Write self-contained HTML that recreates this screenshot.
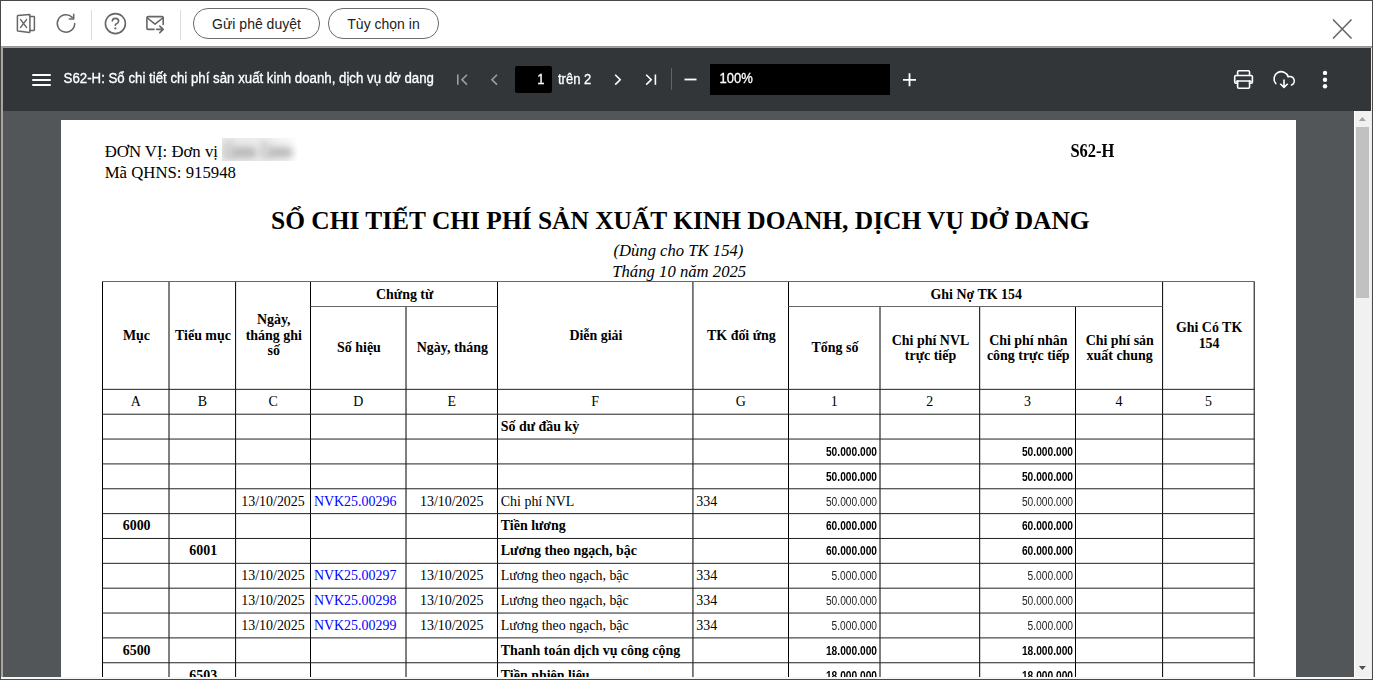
<!DOCTYPE html><html><head><meta charset="utf-8"><style>
*{margin:0;padding:0;box-sizing:border-box}
html,body{width:1373px;height:680px;overflow:hidden;background:#4b4946}
.a{position:absolute}
.t{position:absolute;white-space:nowrap}
</style></head><body>
<div class="a" style="left:1px;top:1px;width:1371px;height:45px;background:#fff"></div>
<div class="a" style="left:1px;top:46px;width:1371px;height:1px;background:#999"></div>
<div class="a" style="left:1px;top:47px;width:1371px;height:1px;background:#a0a0a0"></div>
<div class="a" style="left:1px;top:46px;width:2px;height:632px;background:#a6a6a6"></div>
<div class="a" style="left:1px;top:677px;width:1371px;height:2px;background:#f6f6f6"></div>
<div class="a" style="left:1371px;top:48px;width:1px;height:631px;background:#ececec"></div>
<svg class="a" style="left:0;top:0" width="1373" height="46" viewBox="0 0 1373 46">
<g fill="none" stroke="#666" stroke-width="1.5" stroke-linejoin="round" stroke-linecap="round">
<path d="M17.4 16.2 Q17.4 15.6 18 15.5 L29.3 14.5 Q29.9 14.5 29.9 15.1 L29.9 31.8 Q29.9 32.4 29.3 32.4 L18 31.1 Q17.4 31 17.4 30.4 Z"/>
<path d="M29.9 16.6 L33.8 16.6 Q34.4 16.6 34.4 17.2 L34.4 29.8 Q34.4 30.4 33.8 30.4 L29.9 30.4"/>
<path d="M20.6 19.6 L26.5 27.4 M26.5 19.6 L20.6 27.4"/>
<path d="M74.7 23.5 A8.7 8.7 0 1 1 72.2 17.35"/>
<path d="M69.3 19 L73.7 19 L73.7 14.2"/>
</g>
<g fill="none" stroke="#666" stroke-width="1.6" stroke-linejoin="round" stroke-linecap="round">
<circle cx="115.4" cy="23.6" r="10"/>
<path d="M112.3 21 Q112.5 18.4 115.4 18.4 Q118.6 18.4 118.6 21.2 Q118.6 23.2 116.2 24 Q115.3 24.4 115.3 25.3"/>
<path d="M163.2 24.4 L163.2 17.8 Q163.2 16.6 162 16.6 L148.1 16.6 Q146.9 16.6 146.9 17.8 L146.9 28.15 Q146.9 29.35 148.1 29.35 L154.1 29.35"/>
<path d="M147.4 18 L155 24.2 L162.7 18"/>
<path d="M156.6 29.35 L163.2 29.35 M159.8 26.1 L163.2 29.35 L159.8 32.6"/>
</g>
<circle cx="115.4" cy="28.4" r="1.05" fill="#666"/>
<rect x="91" y="10" width="1" height="30" fill="#ddd"/>
<rect x="180" y="10" width="1" height="30" fill="#ddd"/>
<g stroke="#666" stroke-width="1.6" stroke-linecap="butt">
<path d="M1333 19.5 L1351.5 38.5 M1351.5 19.5 L1333 38.5"/>
</g>
</svg>
<div class="a" style="left:193px;top:8px;width:127px;height:31px;border:1px solid #6b6b6b;border-radius:15px"></div>
<div class="a" style="left:328px;top:8px;width:111px;height:31px;border:1px solid #6b6b6b;border-radius:15px"></div>
<div class="t" style="top:15.75px;font-family:'Liberation Sans', sans-serif;font-size:14px;line-height:16.8px;font-weight:400;font-style:normal;color:#212121;left:193.00px;width:127.00px;text-align:center;">Gửi phê duyệt</div>
<div class="t" style="top:15.75px;font-family:'Liberation Sans', sans-serif;font-size:14px;line-height:16.8px;font-weight:400;font-style:normal;color:#212121;left:328.00px;width:111.00px;text-align:center;">Tùy chọn in</div>
<div class="a" style="left:3px;top:48px;width:1368px;height:63px;background:#323639"></div>
<div class="a" style="left:3px;top:111px;width:1368px;height:566px;background:#525659"></div>
<div class="a" style="left:32px;top:73.5px;width:19px;height:2px;background:#fff;border-radius:1px"></div>
<div class="a" style="left:32px;top:78.5px;width:19px;height:2px;background:#fff;border-radius:1px"></div>
<div class="a" style="left:32px;top:83.5px;width:19px;height:2px;background:#fff;border-radius:1px"></div>
<div class="t" style="top:71.46px;font-family:'Liberation Sans', sans-serif;font-size:13.25px;line-height:15.9px;font-weight:400;font-style:normal;color:#fff;left:63.60px;transform:scaleY(1.09);transform-origin:0 12.54px;-webkit-text-stroke:0.3px #fff;">S62-H: Sổ chi tiết chi phí sản xuất kinh doanh, dịch vụ dở dang</div>
<svg class="a" style="left:0;top:48px" width="1373" height="63" viewBox="0 48 1373 63">
<g fill="none" stroke-width="1.6" stroke-linecap="butt" stroke-linejoin="miter">
<path d="M457.8 74.5 L457.8 84.8" stroke="#9aa0a6"/>
<path d="M467 74.8 L462 79.7 L467 84.6" stroke="#9aa0a6"/>
<path d="M497 74.8 L492 79.7 L497 84.6" stroke="#9aa0a6"/>
<path d="M615.2 74.8 L620.2 79.7 L615.2 84.6" stroke="#fff"/>
<path d="M646.2 74.8 L651.2 79.7 L646.2 84.6" stroke="#fff"/>
<path d="M655.4 74.5 L655.4 84.8" stroke="#fff"/>
<path d="M684.5 79.5 L696.5 79.5" stroke="#fff" stroke-width="1.8"/>
<path d="M903 79.8 L916 79.8 M909.5 73.3 L909.5 86.3" stroke="#fff" stroke-width="1.8"/>
</g>
<rect x="671" y="68" width="1" height="22" fill="#5f6368"/>
<rect x="515" y="66" width="37" height="27" rx="2" fill="#000"/>
<rect x="710" y="64" width="180" height="31" fill="#000"/>
<g fill="none" stroke="#fff" stroke-width="1.6" stroke-linejoin="round" stroke-linecap="round">
<path d="M1237.6 75.5 L1237.6 71.9 Q1237.6 70.7 1238.8 70.7 L1248.35 70.7 Q1249.55 70.7 1249.55 71.9 L1249.55 75.5"/>
<path d="M1237.6 83.3 L1235.9 83.3 Q1234.7 83.3 1234.7 82.1 L1234.7 76.7 Q1234.7 75.5 1235.9 75.5 L1251.2 75.5 Q1252.4 75.5 1252.4 76.7 L1252.4 82.1 Q1252.4 83.3 1251.2 83.3 L1249.55 83.3"/>
<path d="M1236.4 81.8 Q1236.4 81 1237.2 81 L1250.2 81 Q1251 81 1251 81.8"/>
<path d="M1237.6 81 L1237.6 87 Q1237.6 88.2 1238.8 88.2 L1248.35 88.2 Q1249.55 88.2 1249.55 87 L1249.55 81"/>
<path d="M1275.8 83.6 A7.2 7.2 0 1 1 1288.15 76.85 A4.4 4.4 0 0 1 1291.5 85"/>
<path d="M1284 79.4 L1284 87.4 M1280.3 83.7 L1284 87.4 L1287.7 83.7" stroke-linecap="butt"/>
</g>
<circle cx="1325" cy="72.9" r="2.2" fill="#fff"/>
<circle cx="1325" cy="79.7" r="2.2" fill="#fff"/>
<circle cx="1325" cy="86.3" r="2.2" fill="#fff"/>
</svg>
<div class="t" style="top:71.80px;font-family:'Liberation Sans', sans-serif;font-size:13px;line-height:15.6px;font-weight:400;font-style:normal;color:#fff;right:828.50px;text-align:right;transform:scaleY(1.09);transform-origin:0 12.30px;-webkit-text-stroke:0.3px #fff;">1</div>
<div class="t" style="top:71.80px;font-family:'Liberation Sans', sans-serif;font-size:13px;line-height:15.6px;font-weight:400;font-style:normal;color:#fff;left:558.00px;transform:scaleY(1.09);transform-origin:0 12.30px;-webkit-text-stroke:0.3px #fff;">trên 2</div>
<div class="t" style="top:70.90px;font-family:'Liberation Sans', sans-serif;font-size:13px;line-height:15.6px;font-weight:400;font-style:normal;color:#fff;left:719.60px;transform:scaleY(1.09);transform-origin:0 12.30px;-webkit-text-stroke:0.3px #fff;">100%</div>
<div class="a" style="left:1354px;top:111px;width:17px;height:566px;background:#f1f1f1;border-left:1px solid #fff"></div>
<div class="a" style="left:1356px;top:127px;width:13px;height:171px;background:#c1c1c1"></div>
<svg class="a" style="left:1354px;top:111px" width="17" height="566" viewBox="1354 111 17 566">
<path d="M1358.9 121 L1362.4 117 L1365.9 121 Z" fill="#a3a3a3"/>
<path d="M1358.9 666 L1362.4 670 L1365.9 666 Z" fill="#505050"/>
</svg>
<div class="a" style="left:61px;top:120px;width:1235px;height:557px;background:#fff;overflow:hidden">
<div class="t" style="top:21.60px;font-family:'Liberation Serif', serif;font-size:16.75px;line-height:20.1px;font-weight:400;font-style:normal;color:#000;left:43.70px;">ĐƠN VỊ: Đơn vị</div>
<div class="t" style="top:42.50px;font-family:'Liberation Serif', serif;font-size:16.75px;line-height:20.1px;font-weight:400;font-style:normal;color:#000;left:43.70px;">Mã QHNS: 915948</div>
<div class="a" style="left:161px;top:18px;width:76px;height:23px;overflow:hidden;background:linear-gradient(90deg,#e9e9e9 0%,#eeeeee 55%,#f6f6f6 85%,#fff 100%)"><div class="a" style="left:3px;top:9px;width:32px;height:11px;border-radius:6px;background:#b9b9b9;filter:blur(3.5px)"></div><div class="a" style="left:2px;top:3px;width:9px;height:17px;background:#d2d2d2;filter:blur(3px)"></div><div class="a" style="left:40px;top:9px;width:31px;height:11px;border-radius:6px;background:#bcbcbc;filter:blur(3.5px)"></div><div class="a" style="left:38px;top:3px;width:9px;height:16px;background:#d4d4d4;filter:blur(3px)"></div></div>
<div class="t" style="top:21.53px;font-family:'Liberation Serif', serif;font-size:16.5px;line-height:19.8px;font-weight:700;font-style:normal;color:#000;left:1009.40px;transform:scaleY(1.09);transform-origin:0 15.2px">S62-H</div>
<div class="t" style="top:85.84px;font-family:'Liberation Serif', serif;font-size:25.45px;line-height:30.54px;font-weight:700;font-style:normal;color:#000;left:210.00px;width:816.00px;text-align:center;">SỔ CHI TIẾT CHI PHÍ SẢN XUẤT KINH DOANH, DỊCH VỤ DỞ DANG</div>
<div class="t" style="top:121.39px;font-family:'Liberation Serif', serif;font-size:16.65px;line-height:19.98px;font-weight:400;font-style:italic;color:#000;left:552.40px;width:130.00px;text-align:center;">(Dùng cho TK 154)</div>
<div class="t" style="top:141.64px;font-family:'Liberation Serif', serif;font-size:16.7px;line-height:20.04px;font-weight:400;font-style:italic;color:#000;left:551.20px;width:134.10px;text-align:center;">Tháng 10 năm 2025</div>
<svg class="a" style="left:0;top:0" width="1235" height="557" viewBox="61 120 1235 557"><g stroke="#000" stroke-width="1.0" fill="none"><path d="M102.5 281.6 L102.5 700"/><path d="M169.0 281.6 L169.0 700"/><path d="M235.6 281.6 L235.6 700"/><path d="M310.5 281.6 L310.5 700"/><path d="M406.0 306.5 L406.0 700"/><path d="M497.5 281.6 L497.5 700"/><path d="M692.95 281.6 L692.95 700"/><path d="M788.5 281.6 L788.5 700"/><path d="M880.0 306.5 L880.0 700"/><path d="M979.7 306.5 L979.7 700"/><path d="M1075.5 306.5 L1075.5 700"/><path d="M1162.6 281.6 L1162.6 700"/><path d="M1254.2 281.6 L1254.2 700"/></g><g stroke="#222" stroke-width="1.0" fill="none"><path stroke="#666" d="M102.0 281.5 L1254.7 281.5"/><path stroke="#666" d="M310.5 306.5 L497.5 306.5"/><path stroke="#666" d="M788.5 306.5 L1162.6 306.5"/><path d="M102.5 389.35 L1254.2 389.35"/><path d="M102.5 414.21 L1254.2 414.21"/><path d="M102.5 439.06 L1254.2 439.06"/><path d="M102.5 463.92 L1254.2 463.92"/><path d="M102.5 488.77 L1254.2 488.77"/><path d="M102.5 513.62 L1254.2 513.62"/><path d="M102.5 538.48 L1254.2 538.48"/><path d="M102.5 563.34 L1254.2 563.34"/><path d="M102.5 588.19 L1254.2 588.19"/><path d="M102.5 613.05 L1254.2 613.05"/><path d="M102.5 637.90 L1254.2 637.90"/><path d="M102.5 662.76 L1254.2 662.76"/><path d="M102.5 687.61 L1254.2 687.61"/></g></svg>
<div class="t" style="top:207.82px;font-family:'Liberation Serif', serif;font-size:13.95px;line-height:16.74px;font-weight:700;font-style:normal;color:#000;left:42.20px;width:66.50px;text-align:center;">Mục</div>
<div class="t" style="top:207.82px;font-family:'Liberation Serif', serif;font-size:13.95px;line-height:16.74px;font-weight:700;font-style:normal;color:#000;left:108.70px;width:66.60px;text-align:center;">Tiểu mục</div>
<div class="t" style="top:192.12px;font-family:'Liberation Serif', serif;font-size:13.95px;line-height:16.74px;font-weight:700;font-style:normal;color:#000;left:175.30px;width:74.90px;text-align:center;">Ngày,</div>
<div class="t" style="top:207.77px;font-family:'Liberation Serif', serif;font-size:13.95px;line-height:16.74px;font-weight:700;font-style:normal;color:#000;left:175.30px;width:74.90px;text-align:center;">tháng ghi</div>
<div class="t" style="top:223.42px;font-family:'Liberation Serif', serif;font-size:13.95px;line-height:16.74px;font-weight:700;font-style:normal;color:#000;left:175.30px;width:74.90px;text-align:center;">số</div>
<div class="t" style="top:167.02px;font-family:'Liberation Serif', serif;font-size:13.95px;line-height:16.74px;font-weight:700;font-style:normal;color:#000;left:250.20px;width:187.00px;text-align:center;">Chứng từ</div>
<div class="t" style="top:220.02px;font-family:'Liberation Serif', serif;font-size:13.95px;line-height:16.74px;font-weight:700;font-style:normal;color:#000;left:250.20px;width:95.50px;text-align:center;">Số hiệu</div>
<div class="t" style="top:220.02px;font-family:'Liberation Serif', serif;font-size:13.95px;line-height:16.74px;font-weight:700;font-style:normal;color:#000;left:345.70px;width:91.50px;text-align:center;">Ngày, tháng</div>
<div class="t" style="top:207.92px;font-family:'Liberation Serif', serif;font-size:13.95px;line-height:16.74px;font-weight:700;font-style:normal;color:#000;left:437.20px;width:195.45px;text-align:center;">Diễn giải</div>
<div class="t" style="top:207.92px;font-family:'Liberation Serif', serif;font-size:13.95px;line-height:16.74px;font-weight:700;font-style:normal;color:#000;left:632.65px;width:95.55px;text-align:center;">TK đối ứng</div>
<div class="t" style="top:166.82px;font-family:'Liberation Serif', serif;font-size:13.95px;line-height:16.74px;font-weight:700;font-style:normal;color:#000;left:728.20px;width:374.10px;text-align:center;">Ghi Nợ TK 154</div>
<div class="t" style="top:220.32px;font-family:'Liberation Serif', serif;font-size:13.95px;line-height:16.74px;font-weight:700;font-style:normal;color:#000;left:728.20px;width:91.50px;text-align:center;">Tổng số</div>
<div class="t" style="top:212.62px;font-family:'Liberation Serif', serif;font-size:13.95px;line-height:16.74px;font-weight:700;font-style:normal;color:#000;left:819.70px;width:99.70px;text-align:center;">Chi phí NVL</div>
<div class="t" style="top:228.32px;font-family:'Liberation Serif', serif;font-size:13.95px;line-height:16.74px;font-weight:700;font-style:normal;color:#000;left:819.70px;width:99.70px;text-align:center;">trực tiếp</div>
<div class="t" style="top:212.62px;font-family:'Liberation Serif', serif;font-size:13.95px;line-height:16.74px;font-weight:700;font-style:normal;color:#000;left:919.40px;width:95.80px;text-align:center;">Chi phí nhân</div>
<div class="t" style="top:228.32px;font-family:'Liberation Serif', serif;font-size:13.95px;line-height:16.74px;font-weight:700;font-style:normal;color:#000;left:919.40px;width:95.80px;text-align:center;">công trực tiếp</div>
<div class="t" style="top:212.62px;font-family:'Liberation Serif', serif;font-size:13.95px;line-height:16.74px;font-weight:700;font-style:normal;color:#000;left:1015.20px;width:87.10px;text-align:center;">Chi phí sản</div>
<div class="t" style="top:228.32px;font-family:'Liberation Serif', serif;font-size:13.95px;line-height:16.74px;font-weight:700;font-style:normal;color:#000;left:1015.20px;width:87.10px;text-align:center;">xuất chung</div>
<div class="t" style="top:199.62px;font-family:'Liberation Serif', serif;font-size:13.95px;line-height:16.74px;font-weight:700;font-style:normal;color:#000;left:1102.30px;width:91.60px;text-align:center;">Ghi Có TK</div>
<div class="t" style="top:215.62px;font-family:'Liberation Serif', serif;font-size:13.95px;line-height:16.74px;font-weight:700;font-style:normal;color:#000;left:1102.30px;width:91.60px;text-align:center;">154</div>
<div class="t" style="top:274.42px;font-family:'Liberation Serif', serif;font-size:13.95px;line-height:16.74px;font-weight:400;font-style:normal;color:#000;left:41.50px;width:66.50px;text-align:center;">A</div>
<div class="t" style="top:274.42px;font-family:'Liberation Serif', serif;font-size:13.95px;line-height:16.74px;font-weight:400;font-style:normal;color:#000;left:108.00px;width:66.60px;text-align:center;">B</div>
<div class="t" style="top:274.42px;font-family:'Liberation Serif', serif;font-size:13.95px;line-height:16.74px;font-weight:400;font-style:normal;color:#000;left:174.60px;width:74.90px;text-align:center;">C</div>
<div class="t" style="top:274.42px;font-family:'Liberation Serif', serif;font-size:13.95px;line-height:16.74px;font-weight:400;font-style:normal;color:#000;left:249.50px;width:95.50px;text-align:center;">D</div>
<div class="t" style="top:274.42px;font-family:'Liberation Serif', serif;font-size:13.95px;line-height:16.74px;font-weight:400;font-style:normal;color:#000;left:345.00px;width:91.50px;text-align:center;">E</div>
<div class="t" style="top:274.42px;font-family:'Liberation Serif', serif;font-size:13.95px;line-height:16.74px;font-weight:400;font-style:normal;color:#000;left:436.50px;width:195.45px;text-align:center;">F</div>
<div class="t" style="top:274.42px;font-family:'Liberation Serif', serif;font-size:13.95px;line-height:16.74px;font-weight:400;font-style:normal;color:#000;left:631.95px;width:95.55px;text-align:center;">G</div>
<div class="t" style="top:274.42px;font-family:'Liberation Serif', serif;font-size:13.95px;line-height:16.74px;font-weight:400;font-style:normal;color:#000;left:727.50px;width:91.50px;text-align:center;">1</div>
<div class="t" style="top:274.42px;font-family:'Liberation Serif', serif;font-size:13.95px;line-height:16.74px;font-weight:400;font-style:normal;color:#000;left:819.00px;width:99.70px;text-align:center;">2</div>
<div class="t" style="top:274.42px;font-family:'Liberation Serif', serif;font-size:13.95px;line-height:16.74px;font-weight:400;font-style:normal;color:#000;left:918.70px;width:95.80px;text-align:center;">3</div>
<div class="t" style="top:274.42px;font-family:'Liberation Serif', serif;font-size:13.95px;line-height:16.74px;font-weight:400;font-style:normal;color:#000;left:1014.50px;width:87.10px;text-align:center;">4</div>
<div class="t" style="top:274.42px;font-family:'Liberation Serif', serif;font-size:13.95px;line-height:16.74px;font-weight:400;font-style:normal;color:#000;left:1101.60px;width:91.60px;text-align:center;">5</div>
<div class="t" style="top:298.98px;font-family:'Liberation Serif', serif;font-size:13.95px;line-height:16.74px;font-weight:700;font-style:normal;color:#000;left:439.80px;">Số dư đầu kỳ</div>
<div class="t" style="left:616.30px;width:200px;top:324.90px;text-align:right;font-family:'Liberation Sans', sans-serif;font-size:12px;line-height:14px;font-weight:700;color:#000;transform:scaleX(0.85);transform-origin:100% 50%">50.000.000</div>
<div class="t" style="left:811.80px;width:200px;top:324.90px;text-align:right;font-family:'Liberation Sans', sans-serif;font-size:12px;line-height:14px;font-weight:700;color:#000;transform:scaleX(0.85);transform-origin:100% 50%">50.000.000</div>
<div class="t" style="left:616.30px;width:200px;top:349.76px;text-align:right;font-family:'Liberation Sans', sans-serif;font-size:12px;line-height:14px;font-weight:700;color:#000;transform:scaleX(0.85);transform-origin:100% 50%">50.000.000</div>
<div class="t" style="left:811.80px;width:200px;top:349.76px;text-align:right;font-family:'Liberation Sans', sans-serif;font-size:12px;line-height:14px;font-weight:700;color:#000;transform:scaleX(0.85);transform-origin:100% 50%">50.000.000</div>
<div class="t" style="top:373.54px;font-family:'Liberation Serif', serif;font-size:13.95px;line-height:16.74px;font-weight:400;font-style:normal;color:#000;left:174.60px;width:74.90px;text-align:center;">13/10/2025</div>
<div class="t" style="top:373.54px;font-family:'Liberation Serif', serif;font-size:13.95px;line-height:16.74px;font-weight:400;font-style:normal;color:#0000ff;left:252.90px;">NVK25.00296</div>
<div class="t" style="top:373.54px;font-family:'Liberation Serif', serif;font-size:13.95px;line-height:16.74px;font-weight:400;font-style:normal;color:#000;left:345.00px;width:91.50px;text-align:center;">13/10/2025</div>
<div class="t" style="top:373.54px;font-family:'Liberation Serif', serif;font-size:13.95px;line-height:16.74px;font-weight:400;font-style:normal;color:#000;left:439.80px;">Chi phí NVL</div>
<div class="t" style="top:373.54px;font-family:'Liberation Serif', serif;font-size:13.95px;line-height:16.74px;font-weight:400;font-style:normal;color:#000;left:635.20px;">334</div>
<div class="t" style="left:616.30px;width:200px;top:374.61px;text-align:right;font-family:'Liberation Sans', sans-serif;font-size:12px;line-height:14px;font-weight:400;color:#222;transform:scaleX(0.85);transform-origin:100% 50%">50.000.000</div>
<div class="t" style="left:811.80px;width:200px;top:374.61px;text-align:right;font-family:'Liberation Sans', sans-serif;font-size:12px;line-height:14px;font-weight:400;color:#222;transform:scaleX(0.85);transform-origin:100% 50%">50.000.000</div>
<div class="t" style="top:398.40px;font-family:'Liberation Serif', serif;font-size:13.95px;line-height:16.74px;font-weight:700;font-style:normal;color:#000;left:42.40px;width:66.50px;text-align:center;">6000</div>
<div class="t" style="top:398.40px;font-family:'Liberation Serif', serif;font-size:13.95px;line-height:16.74px;font-weight:700;font-style:normal;color:#000;left:439.80px;">Tiền lương</div>
<div class="t" style="left:616.30px;width:200px;top:399.47px;text-align:right;font-family:'Liberation Sans', sans-serif;font-size:12px;line-height:14px;font-weight:700;color:#000;transform:scaleX(0.85);transform-origin:100% 50%">60.000.000</div>
<div class="t" style="left:811.80px;width:200px;top:399.47px;text-align:right;font-family:'Liberation Sans', sans-serif;font-size:12px;line-height:14px;font-weight:700;color:#000;transform:scaleX(0.85);transform-origin:100% 50%">60.000.000</div>
<div class="t" style="top:423.25px;font-family:'Liberation Serif', serif;font-size:13.95px;line-height:16.74px;font-weight:700;font-style:normal;color:#000;left:108.90px;width:66.60px;text-align:center;">6001</div>
<div class="t" style="top:423.25px;font-family:'Liberation Serif', serif;font-size:13.95px;line-height:16.74px;font-weight:700;font-style:normal;color:#000;left:439.80px;">Lương theo ngạch, bậc</div>
<div class="t" style="left:616.30px;width:200px;top:424.32px;text-align:right;font-family:'Liberation Sans', sans-serif;font-size:12px;line-height:14px;font-weight:700;color:#000;transform:scaleX(0.85);transform-origin:100% 50%">60.000.000</div>
<div class="t" style="left:811.80px;width:200px;top:424.32px;text-align:right;font-family:'Liberation Sans', sans-serif;font-size:12px;line-height:14px;font-weight:700;color:#000;transform:scaleX(0.85);transform-origin:100% 50%">60.000.000</div>
<div class="t" style="top:448.11px;font-family:'Liberation Serif', serif;font-size:13.95px;line-height:16.74px;font-weight:400;font-style:normal;color:#000;left:174.60px;width:74.90px;text-align:center;">13/10/2025</div>
<div class="t" style="top:448.11px;font-family:'Liberation Serif', serif;font-size:13.95px;line-height:16.74px;font-weight:400;font-style:normal;color:#0000ff;left:252.90px;">NVK25.00297</div>
<div class="t" style="top:448.11px;font-family:'Liberation Serif', serif;font-size:13.95px;line-height:16.74px;font-weight:400;font-style:normal;color:#000;left:345.00px;width:91.50px;text-align:center;">13/10/2025</div>
<div class="t" style="top:448.11px;font-family:'Liberation Serif', serif;font-size:13.95px;line-height:16.74px;font-weight:400;font-style:normal;color:#000;left:439.80px;">Lương theo ngạch, bậc</div>
<div class="t" style="top:448.11px;font-family:'Liberation Serif', serif;font-size:13.95px;line-height:16.74px;font-weight:400;font-style:normal;color:#000;left:635.20px;">334</div>
<div class="t" style="left:616.30px;width:200px;top:449.18px;text-align:right;font-family:'Liberation Sans', sans-serif;font-size:12px;line-height:14px;font-weight:400;color:#222;transform:scaleX(0.85);transform-origin:100% 50%">5.000.000</div>
<div class="t" style="left:811.80px;width:200px;top:449.18px;text-align:right;font-family:'Liberation Sans', sans-serif;font-size:12px;line-height:14px;font-weight:400;color:#222;transform:scaleX(0.85);transform-origin:100% 50%">5.000.000</div>
<div class="t" style="top:472.96px;font-family:'Liberation Serif', serif;font-size:13.95px;line-height:16.74px;font-weight:400;font-style:normal;color:#000;left:174.60px;width:74.90px;text-align:center;">13/10/2025</div>
<div class="t" style="top:472.96px;font-family:'Liberation Serif', serif;font-size:13.95px;line-height:16.74px;font-weight:400;font-style:normal;color:#0000ff;left:252.90px;">NVK25.00298</div>
<div class="t" style="top:472.96px;font-family:'Liberation Serif', serif;font-size:13.95px;line-height:16.74px;font-weight:400;font-style:normal;color:#000;left:345.00px;width:91.50px;text-align:center;">13/10/2025</div>
<div class="t" style="top:472.96px;font-family:'Liberation Serif', serif;font-size:13.95px;line-height:16.74px;font-weight:400;font-style:normal;color:#000;left:439.80px;">Lương theo ngạch, bậc</div>
<div class="t" style="top:472.96px;font-family:'Liberation Serif', serif;font-size:13.95px;line-height:16.74px;font-weight:400;font-style:normal;color:#000;left:635.20px;">334</div>
<div class="t" style="left:616.30px;width:200px;top:474.03px;text-align:right;font-family:'Liberation Sans', sans-serif;font-size:12px;line-height:14px;font-weight:400;color:#222;transform:scaleX(0.85);transform-origin:100% 50%">50.000.000</div>
<div class="t" style="left:811.80px;width:200px;top:474.03px;text-align:right;font-family:'Liberation Sans', sans-serif;font-size:12px;line-height:14px;font-weight:400;color:#222;transform:scaleX(0.85);transform-origin:100% 50%">50.000.000</div>
<div class="t" style="top:497.82px;font-family:'Liberation Serif', serif;font-size:13.95px;line-height:16.74px;font-weight:400;font-style:normal;color:#000;left:174.60px;width:74.90px;text-align:center;">13/10/2025</div>
<div class="t" style="top:497.82px;font-family:'Liberation Serif', serif;font-size:13.95px;line-height:16.74px;font-weight:400;font-style:normal;color:#0000ff;left:252.90px;">NVK25.00299</div>
<div class="t" style="top:497.82px;font-family:'Liberation Serif', serif;font-size:13.95px;line-height:16.74px;font-weight:400;font-style:normal;color:#000;left:345.00px;width:91.50px;text-align:center;">13/10/2025</div>
<div class="t" style="top:497.82px;font-family:'Liberation Serif', serif;font-size:13.95px;line-height:16.74px;font-weight:400;font-style:normal;color:#000;left:439.80px;">Lương theo ngạch, bậc</div>
<div class="t" style="top:497.82px;font-family:'Liberation Serif', serif;font-size:13.95px;line-height:16.74px;font-weight:400;font-style:normal;color:#000;left:635.20px;">334</div>
<div class="t" style="left:616.30px;width:200px;top:498.89px;text-align:right;font-family:'Liberation Sans', sans-serif;font-size:12px;line-height:14px;font-weight:400;color:#222;transform:scaleX(0.85);transform-origin:100% 50%">5.000.000</div>
<div class="t" style="left:811.80px;width:200px;top:498.89px;text-align:right;font-family:'Liberation Sans', sans-serif;font-size:12px;line-height:14px;font-weight:400;color:#222;transform:scaleX(0.85);transform-origin:100% 50%">5.000.000</div>
<div class="t" style="top:522.67px;font-family:'Liberation Serif', serif;font-size:13.95px;line-height:16.74px;font-weight:700;font-style:normal;color:#000;left:42.40px;width:66.50px;text-align:center;">6500</div>
<div class="t" style="top:522.67px;font-family:'Liberation Serif', serif;font-size:13.95px;line-height:16.74px;font-weight:700;font-style:normal;color:#000;left:439.80px;">Thanh toán dịch vụ công cộng</div>
<div class="t" style="left:616.30px;width:200px;top:523.74px;text-align:right;font-family:'Liberation Sans', sans-serif;font-size:12px;line-height:14px;font-weight:700;color:#000;transform:scaleX(0.85);transform-origin:100% 50%">18.000.000</div>
<div class="t" style="left:811.80px;width:200px;top:523.74px;text-align:right;font-family:'Liberation Sans', sans-serif;font-size:12px;line-height:14px;font-weight:700;color:#000;transform:scaleX(0.85);transform-origin:100% 50%">18.000.000</div>
<div class="t" style="top:547.53px;font-family:'Liberation Serif', serif;font-size:13.95px;line-height:16.74px;font-weight:700;font-style:normal;color:#000;left:108.90px;width:66.60px;text-align:center;">6503</div>
<div class="t" style="top:547.53px;font-family:'Liberation Serif', serif;font-size:13.95px;line-height:16.74px;font-weight:700;font-style:normal;color:#000;left:439.80px;">Tiền nhiên liệu</div>
<div class="t" style="left:616.30px;width:200px;top:548.60px;text-align:right;font-family:'Liberation Sans', sans-serif;font-size:12px;line-height:14px;font-weight:700;color:#000;transform:scaleX(0.85);transform-origin:100% 50%">18.000.000</div>
<div class="t" style="left:811.80px;width:200px;top:548.60px;text-align:right;font-family:'Liberation Sans', sans-serif;font-size:12px;line-height:14px;font-weight:700;color:#000;transform:scaleX(0.85);transform-origin:100% 50%">18.000.000</div>
</div>
</body></html>
